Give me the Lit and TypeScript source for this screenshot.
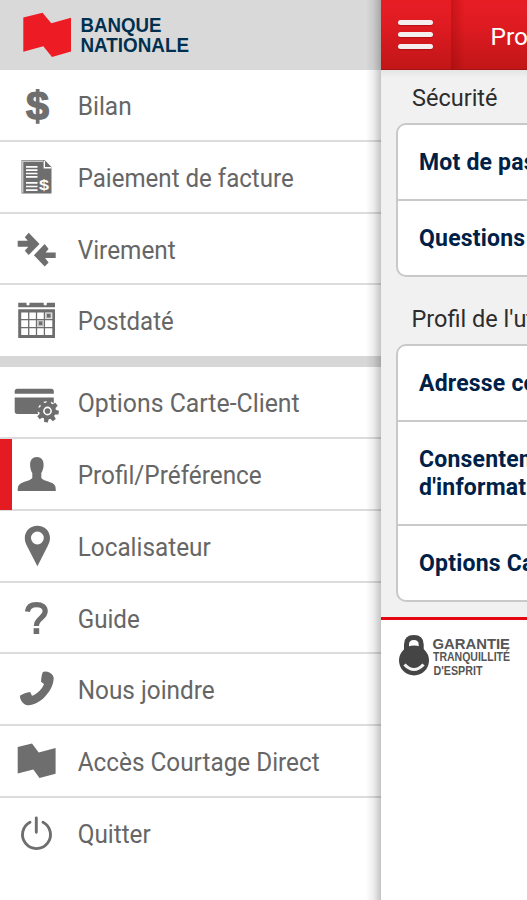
import { LitElement, html, svg, css } from "lit";
import { customElement } from "lit/decorators.js";

const G = "#6e6e6e";

interface Item {
  label: string;
  top: number;
  width: number;
  icon: unknown;
  active?: boolean;
}

const gearTeeth = [0, 45, 90, 135, 180, 225, 270, 315];

const accounts: Item[] = [
  { label: "Bilan", top: 70, width: 54, icon: svg`<text x="37.5" y="119.7" text-anchor="middle" font-family="Liberation Sans, sans-serif" font-weight="700" font-size="41" stroke=${G} stroke-width="1.3" textLength="23" lengthAdjust="spacingAndGlyphs">$</text>` },
  { label: "Paiement de facture", top: 141.8, width: 216, icon: svg`
    <path d="M21.5 159.8H44.5L51.5 166.8V193.3H21.5Z"/>
    <path d="M22.6 192.5V161H43" fill="none" stroke="#c8c8c8" stroke-width="1.6"/>
    <path d="M44.3 160.5V167.5H51.3" fill="none" stroke="#fff" stroke-width="1.4"/>
    <path d="M26 166.7H37.5M26 170H37.5M26 173.3H37.5M26 176.6H37.5M26 182.6H37.5M26 186.3H37.5M26 190H37.5" fill="none" stroke="#fff" stroke-width="1.7"/>
    <text x="44" y="190" text-anchor="middle" font-family="Liberation Sans, sans-serif" font-weight="700" font-size="15" style="fill:#fff" textLength="10" lengthAdjust="spacingAndGlyphs">$</text>` },
  { label: "Virement", top: 213.6, width: 98, icon: svg`
    <path d="M17.7 240.3H27.8L24.8 236.8L28.7 232.3L39.5 243.5L28.7 254.5L24.8 250.3L28.3 246.3H17.7Z"/>
    <path d="M55.7 252H45.6L48.6 248.5L44.7 243.5L33.9 254.8L44.7 266L48.6 262L45.1 257.7H55.7Z"/>` },
  { label: "Postdaté", top: 285.4, width: 96, icon: svg`
    <path d="M18.2 303.2H26.5V305.2Q28 306.8 29.5 305.2V303.2H43.7V305.2Q45.3 306.8 46.8 305.2V303.2H55V307.6H18.2Z"/>
    <path fill-rule="evenodd" d="M18.2 309.7H55V338.4H18.2ZM21.2 312.8V335.5H52.3V312.8Z"/>
    <path d="M28.7 312V336M36.5 312V336M44.4 312V336M21 320H53M21 328H53" fill="none" stroke=${G} stroke-width="1.3"/>
    <path d="M45.5 313.5H51.5V319H45.5ZM37.5 321H43.5V327H37.5Z" opacity=".45"/>
    <path d="M47 314.3H50.5V318H47ZM39 322H42.3V325.5H39Z"/>` },
];

const services: Item[] = [
  { label: "Options Carte-Client", top: 367.3, width: 222, icon: svg`
    <path d="M14.7 394V391.5Q14.7 389 17.2 389H51.3Q53.8 389 53.8 391.5V394Z"/>
    <path d="M14.7 397.7H53.8V404H42L38 414.2H17.2Q14.7 414.2 14.7 411.5Z"/>
    <circle cx="47.5" cy="411.3" r="10" style="fill:#fff"/>
    <circle cx="47.5" cy="411.3" r="8.4"/>
    ${gearTeeth.map((a) => svg`<path d="M45 404.5L45.6 400H49.4L50 404.5Z" transform="rotate(${a + 8} 47.5 411.3)"/>`)}
    <circle cx="47.5" cy="411.3" r="3.6" style="fill:none;stroke:#fff;stroke-width:1.6"/>` },
  { label: "Profil/Préférence", top: 439.1, width: 184, active: true, icon: svg`
    <path d="M36.8 457.2C41 457.2 43.7 460 43.6 465C43.5 469 42.3 471.2 41.3 473.2V478C43 480.3 48.2 481.2 52.2 483.2C55.4 485 55.8 487 55.8 491H17.7C17.7 487 18.2 485 21.4 483.2C25.4 481.2 30.6 480.3 32.3 478V473.2C31.3 471.2 30.2 469 30.1 465C30 460 32.7 457.2 36.8 457.2Z"/>` },
  { label: "Localisateur", top: 510.9, width: 133, icon: svg`
    <path fill-rule="evenodd" d="M37.4 525.7C44.6 525.7 50 531 50 538C50 541 49 543.5 47.7 546L37.4 566.2L27 546C25.7 543.5 24.8 541 24.8 538C24.8 531 30.2 525.7 37.4 525.7ZM37.4 531.5A6.4 6.4 0 1 0 37.4 544.3A6.4 6.4 0 1 0 37.4 531.5Z"/>` },
  { label: "Guide", top: 582.7, width: 62, icon: svg`
    <path d="M27.4 611.3C28 606.5 31 604.3 36.4 604.3C42 604.3 45.2 606.8 45.2 611C45.2 617.5 36.4 618 36.4 625.6" fill="none" stroke=${G} stroke-width="5.2"/><path d="M33.6 627.9H39.2V633.7H33.6Z"/>` },
  { label: "Nous joindre", top: 654.5, width: 137, icon: svg`
    <path d="M42.7 672.7C44 671.7 47 671.7 49.5 673C52.8 675 54.1 677 53.6 680.2C52.8 688.5 46 698.5 37 703.3C32 706 27 706.5 24.2 704.5C21.5 702.5 19.8 699 19.9 696.2C22.5 694.2 27 692.8 30.2 692.4L32 696.3C36.5 694.8 42.5 689.3 44 684.4L41 682.3C41.2 679 41.6 675.7 42.7 672.7Z"/>` },
  { label: "Accès Courtage Direct", top: 726.3, width: 242, icon: svg`
    <path d="M17.7 747.2L32 743.7L38.7 752.7L55.6 748.3V774L39.5 778.4L33.3 769.7L17.7 773.7Z"/>` },
  { label: "Quitter", top: 798.1, width: 73, icon: svg`
    <path d="M30 822.3A14 14 0 1 0 43 822.3M36.3 818V832.3" fill="none" stroke=${G} stroke-width="2.9" stroke-linecap="round"/>` },
];

@customElement("app-root")
export class AppRoot extends LitElement {
  static styles = css`
    :host { display: flex; width: 527px; height: 900px; overflow: hidden; background: #fff; font-family: Roboto, sans-serif; }
    * { box-sizing: border-box; }
    svg { display: block; flex: none; }
    .drawer { width: 381px; height: 900px; flex: none; position: relative; }
    .drawer::after { content: ""; position: absolute; right: 0; top: 0; width: 15px; height: 900px; background: linear-gradient(to right, rgba(0,0,0,0), rgba(0,0,0,.07) 50%, rgba(0,0,0,.23)); }
    .brand { height: 70px; background: #d9d9d9; }
    .group + .group { border-top: 11.3px solid #d7d7d7; }
    .item { height: 71.8px; display: flex; border-bottom: 2px solid #dcdcdc; position: relative; }
    .group:first-of-type .item:last-child { height: 70.9px; border-bottom: 0; }
    .group:last-child .item:last-child { border-bottom: 0; }
    .active::before { content: ""; position: absolute; left: 0; top: 0; width: 12px; height: 70.5px; background: #e51b23; }
    .icon { position: relative; fill: #6e6e6e; }
    .label { fill: #666; font-size: 25px; }
    .page { flex: 1; min-width: 0; height: 900px; overflow: hidden; white-space: nowrap; }
    .bar { height: 70px; display: flex; background: linear-gradient(#e71d24, #e01b22 35%, #c11617); border-bottom: 1px solid #a51313; }
    .menu { flex: none; width: 70px; display: flex; flex-direction: column; gap: 7px; padding: 20px 0 0 17px; }
    .menu span { width: 35px; height: 5px; border-radius: 3px; background: #f5eeee; box-shadow: 0 1px 1px rgba(100,0,0,.35); }
    .title { flex: 1; min-width: 0; padding: 22px 0 0 39.5px; color: #fff; font-size: 24.5px; line-height: 29px; background: linear-gradient(to right, rgba(120,0,0,.28), rgba(120,0,0,0) 14px); }
    .content { height: 547px; padding-left: 15px; background: linear-gradient(#e4e4e4, #f1f1f1 8px); }
    .heading { height: 53px; padding: 14px 0 0 16px; color: #2c2c2c; font-size: 23.5px; line-height: 28px; }
    .heading.second { height: 67px; padding: 28px 0 0 15.5px; }
    .card { width: 220px; background: #fff; border: 2px solid #c9c9c9; border-radius: 10px; }
    .row { height: 74px; display: flex; align-items: center; padding: 2px 0 0 21px; font-size: 23px; line-height: 28px; font-weight: 700; letter-spacing: .2px; color: #002147; }
    .row + .row { height: 76px; border-top: 2px solid #c9c9c9; }
    .row + .row.tall { height: 104px; }
    .footer { border-top: 3px solid #e30613; height: 283px; background: #fff; }
  `;

  private item(i: Item) {
    return html`<div class="item ${i.active ? "active" : ""}">
      <svg class="icon" width="78" height="69.8" viewBox="0 ${i.top} 78 69.8">${i.icon}</svg>
      <svg class="label" width="290" height="69.8"><text x="-.3" y="44.7" textLength=${i.width} lengthAdjust="spacingAndGlyphs">${i.label}</text></svg>
    </div>`;
  }

  render() {
    return html`
      <nav class="drawer">
        <header class="brand">
          <svg width="300" height="70">
            <path fill="#ed1c24" d="M23.3 17.5L42.5 12.7L51.3 23.2L71 17.8V51.5L52 57L43.3 46.3L23.3 51.8Z"/>
            <g fill="#00304f" font-family="Liberation Sans, sans-serif" font-weight="700" font-size="19.8">
              <text x="80.5" y="32.2" textLength="81" lengthAdjust="spacingAndGlyphs">BANQUE</text>
              <text x="80.5" y="52" textLength="108.5" lengthAdjust="spacingAndGlyphs">NATIONALE</text>
            </g>
          </svg>
        </header>
        <div class="group">${accounts.map((i) => this.item(i))}</div>
        <div class="group">${services.map((i) => this.item(i))}</div>
      </nav>
      <main class="page">
        <div class="bar">
          <div class="menu"><span></span><span></span><span></span></div>
          <div class="title">Profil</div>
        </div>
        <div class="content">
          <div class="heading">Sécurité</div>
          <div class="card">
            <div class="row">Mot de passe</div>
            <div class="row">Questions</div>
          </div>
          <div class="heading second">Profil de l'utilisateur</div>
          <div class="card">
            <div class="row">Adresse courriel</div>
            <div class="row tall">Consentement<br />d'informations</div>
            <div class="row">Options Carte</div>
          </div>
        </div>
        <div class="footer">
          <svg width="146" height="80" viewBox="381 620 146 80">
            <path d="M406.5 650V644.5Q406.5 637.5 413.8 637.5Q421.2 637.5 421.2 644.5V650" fill="none" stroke="#454545" stroke-width="5"/>
            <ellipse cx="414" cy="660.5" rx="15" ry="15" fill="#454545"/>
            <path d="M404.5 664.5Q414 674.5 423.5 664.5" fill="none" stroke="#f4f4f4" stroke-width="3.2"/>
            <g fill="#555" font-family="Liberation Sans, sans-serif" font-weight="700">
              <text x="432.5" y="648.5" font-size="15" textLength="77.5" lengthAdjust="spacingAndGlyphs">GARANTIE</text>
              <text x="433" y="661.3" font-size="12" textLength="77" lengthAdjust="spacingAndGlyphs">TRANQUILLITÉ</text>
              <text x="433.5" y="674.5" font-size="12" textLength="49" lengthAdjust="spacingAndGlyphs">D'ESPRIT</text>
            </g>
          </svg>
        </div>
      </main>`;
  }
}
